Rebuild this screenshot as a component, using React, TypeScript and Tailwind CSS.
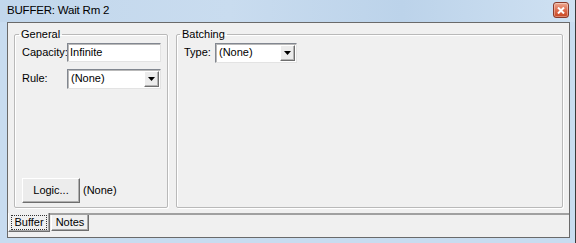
import React from "react";

function Combo({ width }: { width: string }) {
  return (
    <div className={`${width} h-[20px] flex items-center bg-white border border-t-[#828790] border-l-[#828790] border-r-[#e3e3e3] border-b-[#e3e3e3] shadow-[inset_1px_1px_0_#b9b9b9]`}>
      <span className="pl-[3px] flex-1">(None)</span>
      <div className="w-[15px] h-[16px] mr-[1px] flex items-center justify-center bg-[#ececec] border border-t-white border-l-white border-r-[#6e6e6e] border-b-[#6e6e6e] shadow-[inset_-1px_-1px_0_#b4b4b4]">
        <svg width="7" height="4" viewBox="0 0 7 4">
          <path d="M0 0H7L3.5 4Z" fill="#000" />
        </svg>
      </div>
    </div>
  );
}

export default function App() {
  return (
    <div className="w-[576px] h-[243px] flex flex-col bg-[#c8dcf0] border-r border-[#3a3a3a] font-['Liberation_Sans',Arial,sans-serif] text-[11px] text-black overflow-hidden">
      <div className="h-[22px] shrink-0 flex items-center pl-[7px] pr-[6px] bg-[linear-gradient(90deg,#c2d7ec_0%,#c9dcef_40%,#bcd3ea_70%,#cfe1f2_100%)]">
        <span className="text-[11.5px] tracking-[-0.2px]">BUFFER: Wait Rm 2</span>
        <div className="ml-auto w-[16px] h-[16px] -mt-[2px] rounded-[3px] border border-[#8a3a2a] bg-[linear-gradient(180deg,#eeaa92_0%,#dc6d50_50%,#c8451f_100%)] flex items-center justify-center shadow-[inset_0_0_0_1px_rgba(255,255,255,0.35)]">
          <svg width="8" height="7" viewBox="0 0 8 7">
            <path d="M1 0.5L7 6.5M7 0.5L1 6.5" stroke="#fff" strokeWidth="2" />
          </svg>
        </div>
      </div>
      <div className="flex-1 ml-[7px] mr-[5px] mb-[5px] flex flex-col border border-[#6a6a6a] bg-[#f0f0f0]">
        <div className="h-[192px] flex gap-[8px] pt-[3px] px-[6px] pb-[5px] border-b-2 border-[#a0a0a0]">
          <fieldset className="w-[153px] border border-[#b9b9b9] rounded-[2px] shadow-[1px_1px_0_#fff,inset_1px_1px_0_#fff] pl-[7px] pr-[6px] pb-[4px] flex flex-col">
            <legend className="-ml-[3px] px-[2px]">General</legend>
            <div className="flex items-center">
              <span className="w-[45px]">Capacity:</span>
              <div className="w-[94px] h-[19px] flex items-center pl-[2px] bg-white border border-t-[#828790] border-l-[#828790] border-r-[#e3e3e3] border-b-[#e3e3e3] shadow-[inset_1px_1px_0_#b9b9b9]">
                Infinite
              </div>
            </div>
            <div className="flex items-center mt-[7px]">
              <span className="w-[45px]">Rule:</span>
              <Combo width="w-[94px]" />
            </div>
            <div className="mt-auto flex items-center">
              <div className="w-[58px] h-[25px] flex items-center justify-center bg-[#ececec] border border-t-white border-l-white border-r-[#6e6e6e] border-b-[#6e6e6e] shadow-[inset_-1px_-1px_0_#b0b0b0]">
                Logic...
              </div>
              <span className="ml-[3px]">(None)</span>
            </div>
          </fieldset>
          <fieldset className="flex-1 border border-[#b9b9b9] rounded-[2px] shadow-[1px_1px_0_#fff,inset_1px_1px_0_#fff] pl-[7px] pr-[6px] pb-[4px] flex flex-col">
            <legend className="-ml-[4px] px-[2px]">Batching</legend>
            <div className="flex items-center">
              <span className="w-[31px]">Type:</span>
              <Combo width="w-[82px]" />
            </div>
          </fieldset>
        </div>
        <div className="flex items-start">
          <div className="relative -mt-[2px] w-[42px] h-[19px] flex items-center justify-center bg-[#f0f0f0] border-l border-white border-r border-r-[#6e6e6e] border-b border-b-[#6e6e6e] shadow-[inset_-1px_-1px_0_#a8a8a8]">
            <span className="px-[2px] leading-[13px] outline outline-1 outline-dotted outline-[#333]">Buffer</span>
          </div>
          <div className="ml-[1px] w-[38px] h-[16px] flex items-center justify-center bg-[#f0f0f0] border-l border-white border-r border-r-[#6e6e6e] border-b border-b-[#6e6e6e] shadow-[inset_-1px_-1px_0_#a8a8a8]">
            Notes
          </div>
        </div>
      </div>
    </div>
  );
}
